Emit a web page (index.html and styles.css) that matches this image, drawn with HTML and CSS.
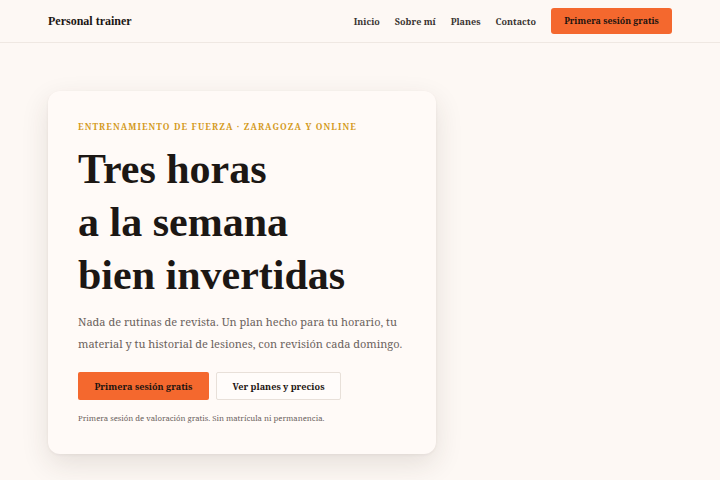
FILE: index.html
```html
<!DOCTYPE html>
<html lang="es">
<head>
<meta charset="utf-8">
<title>Personal trainer</title>
<link rel="stylesheet" href="styles.css">
</head>
<body>
<header class="topbar">
  <div class="brand">Personal trainer</div>
  <nav class="nav">
    <a href="#" class="nav-link">Inicio</a>
    <a href="#" class="nav-link">Sobre mí</a>
    <a href="#" class="nav-link">Planes</a>
    <a href="#" class="nav-link">Contacto</a>
    <a href="#" class="btn btn-primary btn-nav">Primera sesión gratis</a>
  </nav>
</header>
<main class="hero">
  <section class="card">
    <p class="eyebrow">Entrenamiento de fuerza · Zaragoza y online</p>
    <h1 class="title">Tres horas<br>a la semana<br>bien invertidas</h1>
    <p class="lead">Nada de rutinas de revista. Un plan hecho para tu horario, tu material y tu historial de lesiones, con revisión cada domingo.</p>
    <div class="actions">
      <a href="#" class="btn btn-primary">Primera sesión gratis</a>
      <a href="#" class="btn btn-secondary">Ver planes y precios</a>
    </div>
    <p class="note">Primera sesión de valoración gratis. Sin matrícula ni permanencia.</p>
  </section>
</main>
</body>
</html>
```
FILE: styles.css
```css
* { box-sizing: border-box; }
html, body { margin: 0; padding: 0; }
body {
  background: #fdf8f4;
  font-family: "Noto Serif", "DejaVu Serif", serif;
  color: #1c1714;
  width: 720px;
  height: 480px;
  overflow: hidden;
}
.topbar {
  display: flex;
  align-items: center;
  justify-content: space-between;
  height: 43px;
  padding: 0 48px;
  border-bottom: 1px solid #efe8e2;
}
.brand {
  font-family: "Liberation Serif", "Times New Roman", serif;
  font-weight: 700;
  font-size: 12px;
  color: #1c1714;
}
.nav {
  display: flex;
  align-items: center;
}
.nav-link {
  font-weight: 700;
  font-size: 9px;
  color: #3a3431;
  text-decoration: none;
  margin-right: 15px;
}
.btn {
  display: inline-flex;
  align-items: center;
  justify-content: center;
  font-weight: 700;
  font-size: 9.1px;
  color: #1c1410;
  text-decoration: none;
  border-radius: 2px;
}
.btn-primary {
  background: #f4682e;
}
.btn-nav {
  height: 26px;
  width: 121px;
  font-size: 8.8px;
  border-radius: 3px;
  margin-top: -1px;
}
.hero {
  padding: 48px 48px 0;
}
.card {
  width: 388px;
  height: 363px;
  background: #fffaf7;
  border-radius: 12px;
  box-shadow: 0 10px 28px rgba(60, 40, 30, 0.12), 0 1px 3px rgba(60, 40, 30, 0.06);
  padding: 30px 30px;
}
.eyebrow {
  margin: 0;
  font-size: 8.5px;
  font-weight: 700;
  text-transform: uppercase;
  letter-spacing: 1.1px;
  color: #d49a1e;
  line-height: 12px;
}
.title {
  margin: 10px 0 0;
  font-family: "Liberation Serif", "Times New Roman", serif;
  font-size: 42px;
  line-height: 53px;
  font-weight: 700;
  color: #1c1714;
}
.lead {
  margin: 9px 0 0;
  font-size: 11px;
  line-height: 22px;
  color: #6b625d;
}
.actions {
  display: flex;
  gap: 7px;
  margin-top: 17px;
}
.actions .btn {
  height: 28px;
}
.actions .btn-primary { width: 131px; }
.btn-secondary {
  width: 125px;
  background: #fffcfa;
  border: 1px solid #e8e0d9;
}
.note {
  margin: 12px 0 0;
  font-size: 7.75px;
  line-height: 12px;
  color: #6b625d;
}
```
